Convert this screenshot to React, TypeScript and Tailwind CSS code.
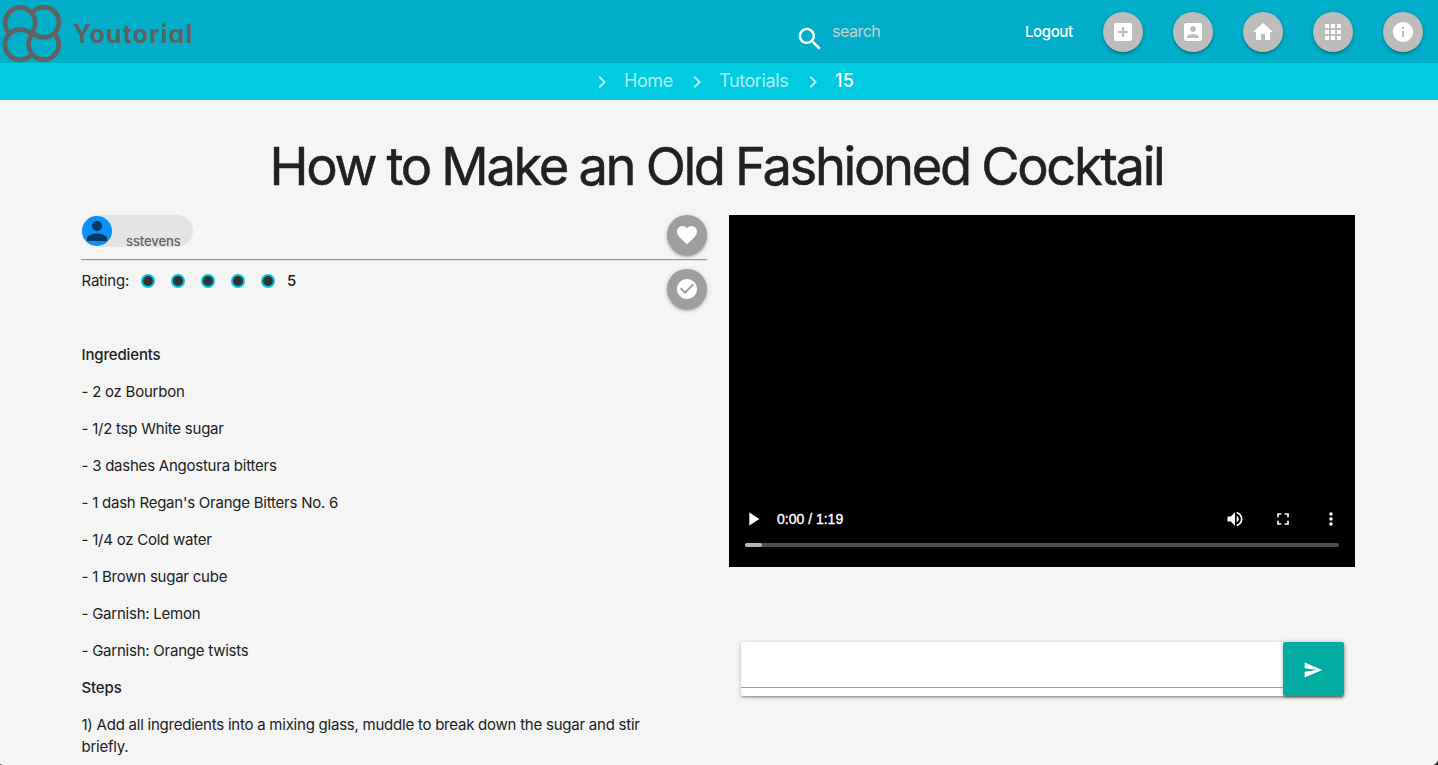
import React from "react";

const ICONS = {
  search: "M15.5 14h-.79l-.28-.27C15.41 12.59 16 11.11 16 9.5 16 5.91 13.09 3 9.5 3S3 5.91 3 9.5 5.91 16 9.5 16c1.61 0 3.09-.59 4.23-1.57l.27.28v.79l5 4.99L20.49 19l-4.99-5zm-6 0C7.01 14 5 11.99 5 9.5S7.01 5 9.5 5 14 7.01 14 9.5 11.99 14 9.5 14z",
  addBox: "M19 3H5c-1.11 0-2 .9-2 2v14c0 1.1.89 2 2 2h14c1.1 0 2-.9 2-2V5c0-1.1-.9-2-2-2zm-2 10h-4v4h-2v-4H7v-2h4V7h2v4h4v2z",
  accountBox: "M3 5v14c0 1.1.89 2 2 2h14c1.1 0 2-.9 2-2V5c0-1.1-.9-2-2-2H5c-1.11 0-2 .9-2 2zm12 4c0 1.66-1.34 3-3 3s-3-1.34-3-3 1.34-3 3-3 3 1.34 3 3zm-9 8c0-2 4-3.1 6-3.1s6 1.1 6 3.1v1H6v-1z",
  home: "M10 20v-6h4v6h5v-8h3L12 3 2 12h3v8z",
  apps: "M4 8h4V4H4v4zm6 12h4v-4h-4v4zm-6 0h4v-4H4v4zm0-6h4v-4H4v4zm6 0h4v-4h-4v4zm6-10v4h4V4h-4zm-6 4h4V4h-4v4zm6 6h4v-4h-4v4zm0 6h4v-4h-4v4z",
  info: "M12 2C6.48 2 2 6.48 2 12s4.48 10 10 10 10-4.48 10-10S17.52 2 12 2zm1 15h-2v-6h2v6zm0-8h-2V7h2v2z",
  chevron: "M10 6L8.59 7.41 13.17 12l-4.58 4.59L10 18l6-6z",
  person: "M12 12c2.21 0 4-1.79 4-4s-1.79-4-4-4-4 1.79-4 4 1.79 4 4 4zm0 2c-2.67 0-8 1.34-8 4v2h16v-2c0-2.66-5.33-4-8-4z",
  heart: "M12 21.35l-1.45-1.32C5.4 15.36 2 12.28 2 8.5 2 5.42 4.42 3 7.5 3c1.74 0 3.41.81 4.5 2.09C13.09 3.81 14.76 3 16.5 3 19.58 3 22 5.42 22 8.5c0 3.78-3.4 6.86-8.55 11.54L12 21.35z",
  check: "M12 2C6.48 2 2 6.48 2 12s4.48 10 10 10 10-4.48 10-10S17.52 2 12 2zm-2 15l-5-5 1.41-1.41L10 14.17l7.59-7.59L19 8l-9 9z",
  play: "M8 5v14l11-7z",
  volume: "M3 9v6h4l5 5V4L7 9H3zm13.5 3c0-1.77-1.02-3.29-2.5-4.03v8.05c1.48-.73 2.5-2.25 2.5-4.02zM14 3.23v2.06c2.89.86 5 3.54 5 6.71s-2.11 5.85-5 6.71v2.06c4.01-.91 7-4.49 7-8.77s-2.99-7.86-7-8.77z",
  fullscreen: "M7 14H5v5h5v-2H7v-3zm-2-4h2V7h3V5H5v5zm12 7h-3v2h5v-5h-2v3zM14 5v2h3v3h2V5h-5z",
  more: "M12 8c1.1 0 2-.9 2-2s-.9-2-2-2-2 .9-2 2 .9 2 2 2zm0 2c-1.1 0-2 .9-2 2s.9 2 2 2 2-.9 2-2-.9-2-2-2zm0 6c-1.1 0-2 .9-2 2s.9 2 2 2 2-.9 2-2-.9-2-2-2z",
  send: "M2.01 21L23 12 2.01 3 2 10l15 2-15 2z",
};

function Icon({ name, className }: { name: keyof typeof ICONS; className: string }) {
  return (
    <svg viewBox="0 0 24 24" fill="currentColor" className={`block shrink-0 ${className}`} aria-hidden="true">
      <path d={ICONS[name]} />
    </svg>
  );
}

function RoundButton({ name, className }: { name: keyof typeof ICONS; className: string }) {
  return (
    <button
      className={`flex size-10 shrink-0 items-center justify-center rounded-full text-white shadow-[0_2px_2px_0_rgba(0,0,0,0.14),0_3px_1px_-2px_rgba(0,0,0,0.12),0_1px_5px_0_rgba(0,0,0,0.2)] ${className}`}
    >
      <Icon name={name} className="size-6" />
    </button>
  );
}

function Header() {
  return (
    <header className="flex h-[63px] items-start bg-[#00aec9]">
      <svg viewBox="0 0 64 63" className="h-[63px] w-16 shrink-0" fill="none" stroke="#616161" strokeWidth="4.7">
        <path d="M9.8 33.8A15.1 15.1 0 1 1 30.5 33.8" />
        <path d="M32 12.9A15.1 15.1 0 1 1 32 31.7" />
        <path d="M54.1 33.5A15.1 15.1 0 1 1 33.3 33.5" />
        <path d="M32 54A15.1 15.1 0 1 1 32 35.3" />
      </svg>
      <div className="ml-[9px] w-[722px] pt-[18px] text-[25px] leading-8 font-bold tracking-[1.1px] text-[#616161] [font-feature-settings:'cv11']">
        Youtorial
      </div>
      <Icon name="search" className="mt-[24px] size-[30px] text-white" />
      <span className="mt-[19px] ml-[7px] w-[193px] text-[16px] leading-6 tracking-[-0.5px] text-[#c8d0d2]">search</span>
      <span className="mt-[21px] w-[78px] text-[15px] leading-[22px] font-medium tracking-[-0.4px] text-white">Logout</span>
      <nav className="mt-3 flex gap-[30px]">
        <RoundButton name="addBox" className="bg-[#bdbdbd]" />
        <RoundButton name="accountBox" className="bg-[#bdbdbd]" />
        <RoundButton name="home" className="bg-[#bdbdbd]" />
        <RoundButton name="apps" className="bg-[#bdbdbd]" />
        <RoundButton name="info" className="bg-[#bdbdbd]" />
      </nav>
    </header>
  );
}

function Breadcrumbs() {
  return (
    <div className="flex h-[37px] items-center bg-[#00cbe1] pl-[590px] text-[18px] leading-[26px] tracking-[-0.4px] text-white/70">
      <Icon name="chevron" className="size-6" />
      <span className="mb-[2px] ml-[10px] w-[61px]">Home</span>
      <Icon name="chevron" className="size-6" />
      <span className="mb-[2px] ml-[10px] w-[82px]">Tutorials</span>
      <Icon name="chevron" className="size-6" />
      <span className="mb-[2px] ml-[10px] font-medium tracking-[0.2px] text-white">15</span>
    </div>
  );
}

const INGREDIENTS = [
  "2 oz Bourbon",
  "1/2 tsp White sugar",
  "3 dashes Angostura bitters",
  "1 dash Regan's Orange Bitters No. 6",
  "1/4 oz Cold water",
  "1 Brown sugar cube",
  "Garnish: Lemon",
  "Garnish: Orange twists",
];

function Details() {
  return (
    <section className="text-[15px] leading-[22px] tracking-[-0.235px]">
      <div className="flex h-[44px] items-start justify-between">
        <div className="flex h-8 w-28 rounded-full bg-[#e4e4e4] pt-px pl-px">
          <div className="flex size-[30px] items-center justify-center rounded-full bg-[#0a91f9] text-[#043a64]">
            <Icon name="person" className="size-[30px]" />
          </div>
          <span className="mt-[9px] ml-[14px] text-[13px] leading-8 font-medium tracking-[-0.1px] text-[#616161]">
            sstevens
          </span>
        </div>
        <RoundButton name="heart" className="bg-[#9e9e9e]" />
      </div>
      <div className="h-[2px] border-t border-[#949494] bg-[#e4e4e4]" />
      <div className="mt-2 flex h-[75px] items-start">
        <span className="mt-px w-[60px] pl-[0.5px] tracking-[-0.2px]">Rating:</span>
        <div className="mt-[5px] flex w-[146px] gap-4">
          {[1, 2, 3, 4, 5].map((n) => (
            <span key={n} className="size-[14px] rounded-full border-2 border-[#00c4da] bg-[#333]" />
          ))}
        </div>
        <span className="mt-px font-medium">5</span>
        <RoundButton name="check" className="ml-auto bg-[#9e9e9e]" />
      </div>
      <div className="flex flex-col gap-[15px] pl-[0.5px]">
        <h2 className="font-medium tracking-[-0.15px]">Ingredients</h2>
        {INGREDIENTS.map((item) => (
          <p key={item}>- {item}</p>
        ))}
        <h2 className="font-medium tracking-[-0.15px]">Steps</h2>
        <p>
          1) Add all ingredients into a mixing glass, muddle to break down the sugar and stir
          <br />
          briefly.
        </p>
      </div>
    </section>
  );
}

function Player() {
  return (
    <div className="flex h-[352px] flex-col justify-end bg-black px-4 pb-5 text-white">
      <div className="flex h-5 items-center">
        <Icon name="play" className="-ml-[3px] size-[22px]" />
        <span className="ml-[13px] font-['Liberation_Sans',sans-serif] text-[14px] [-webkit-text-stroke:0.35px_white]">
          0:00 / 1:19
        </span>
        <div className="mr-[-2px] ml-auto flex gap-[28px]">
          <Icon name="volume" className="size-5" />
          <Icon name="fullscreen" className="size-5" />
          <Icon name="more" className="size-5" />
        </div>
      </div>
      <div className="mt-[14px] h-1 rounded-full bg-[#4d4d4d]">
        <div className="h-1 w-[17px] rounded-full bg-[#b8b8b8]" />
      </div>
    </div>
  );
}

function CommentForm() {
  return (
    <form className="mt-[75px] ml-3 flex h-[54px] w-[603px] rounded-[2px] bg-white shadow-[0_2px_2px_0_rgba(0,0,0,0.14),0_3px_1px_-2px_rgba(0,0,0,0.12),0_1px_5px_0_rgba(0,0,0,0.2)]">
      <div className="h-[46px] flex-1 border-b border-[#9e9e9e]" />
      <button
        type="button"
        className="flex w-[61px] items-center justify-center rounded-[2px] bg-[#00ada0] pt-[2px] text-white shadow-[0_2px_2px_0_rgba(0,0,0,0.14),0_3px_1px_-2px_rgba(0,0,0,0.12),0_1px_5px_0_rgba(0,0,0,0.2)]"
      >
        <Icon name="send" className="mr-px size-5" />
      </button>
    </form>
  );
}

export default function App() {
  return (
    <div className="relative h-[765px] w-[1438px] overflow-hidden bg-[#f5f5f5] font-[Inter,sans-serif] text-[#212121]">
      <Header />
      <Breadcrumbs />
      <h1 className="mt-[37px] mb-[19px] pr-[5px] text-center text-[52.5px] leading-[59px] font-normal tracking-[-2.35px] whitespace-nowrap [word-spacing:-1px] [-webkit-text-stroke:0.5px_#212121]">
        How to Make an Old Fashioned Cocktail
      </h1>
      <main className="grid grid-cols-2 gap-[22px] pr-[83px] pl-[81px]">
        <Details />
        <section>
          <Player />
          <CommentForm />
        </section>
      </main>
      <svg viewBox="0 0 5 5" className="absolute right-0 bottom-0 size-[5px]" fill="#222">
        <path d="M5 0V5H0Q4 4 5 0Z" />
      </svg>
      <svg viewBox="0 0 3 1" className="absolute bottom-0 left-0 h-px w-[3px]" fill="#444">
        <path d="M0 0L3 1H0Z" />
      </svg>
    </div>
  );
}
